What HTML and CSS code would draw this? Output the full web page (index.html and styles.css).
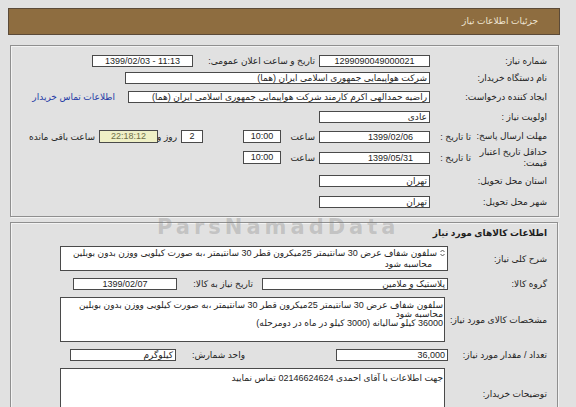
FILE: index.html
```html
<!DOCTYPE html>
<html lang="fa" dir="rtl">
<head>
    <meta charset="UTF-8">
    <meta name="viewport" content="width=device-width, initial-scale=1.0">
    <title>جزئیات اطلاعات نیاز</title>
    <link rel="stylesheet" href="styles.css">
</head>
<body>
    <div class="page">
        <div class="header">جزئیات اطلاعات نیاز</div>

        <div class="panel panel-info">
            <div class="row">
                <div class="label">شماره نیاز:</div>
                <div class="box w111 center">1299090049000021</div>
                <div class="label-mid w126">تاریخ و ساعت اعلان عمومی:</div>
                <div class="box w101 center ltr">1399/02/03 - 11:13</div>
            </div>
            <div class="row">
                <div class="label">نام دستگاه خریدار:</div>
                <div class="box w305">شرکت هواپیمایی جمهوری اسلامی ایران (هما)</div>
            </div>
            <div class="row">
                <div class="label">ایجاد کننده درخواست:</div>
                <div class="box w302">راضیه حمدالهی اکرم کارمند شرکت هواپیمایی جمهوری اسلامی ایران (هما)</div>
                <a href="#" class="contact-link">اطلاعات تماس خریدار</a>
            </div>
            <div class="row">
                <div class="label">اولویت نیاز :</div>
                <div class="box w111">عادی</div>
            </div>
            <div class="row">
                <div class="label split">
                    <span class="main-label">مهلت ارسال پاسخ:</span>
                    <span class="sub-label">تا تاریخ :</span>
                </div>
                <div class="box w111 date">1399/02/06</div>
                <div class="label-mid w38">ساعت</div>
                <div class="box w38 center tall">10:00</div>
                <div class="box w22 center tall days">2</div>
                <div class="label-mid w23">روز و</div>
                <div class="box w59 center tall countdown">22:18:12</div>
                <div class="label-mid remain">ساعت باقی مانده</div>
            </div>
            <div class="row">
                <div class="label split">
                    <span class="main-label">حداقل تاریخ اعتبار قیمت:</span>
                    <span class="sub-label">تا تاریخ :</span>
                </div>
                <div class="box w111 date">1399/05/31</div>
                <div class="label-mid w38">ساعت</div>
                <div class="box w38 center tall">10:00</div>
            </div>
            <div class="row">
                <div class="label">استان محل تحویل:</div>
                <div class="box w111">تهران</div>
            </div>
            <div class="row">
                <div class="label">شهر محل تحویل:</div>
                <div class="box w111">تهران</div>
            </div>
        </div>

        <div class="panel panel-goods">
            <h3 class="section-title">اطلاعات کالاهای مورد نیاز</h3>
            <div class="row">
                <div class="label narrow">شرح کلی نیاز:</div>
                <div class="area area-summary">
                    <svg class="spin" width="5" height="8" viewBox="0 0 5 8">
                        <path d="M0.5 3 L2.5 1 L4.5 3" fill="none" stroke="#444" stroke-width="0.9"/>
                        <path d="M0.5 5 L2.5 7 L4.5 5" fill="none" stroke="#444" stroke-width="0.9"/>
                    </svg>
                    <p>سلفون شفاف عرض 30 سانتیمتر 25میکرون قطر 30 سانتیمتر ،به صورت کیلویی ووزن بدون بوبلین</p>
                    <p class="indent">محاسبه شود</p>
                </div>
            </div>
            <div class="row">
                <div class="label narrow">گروه کالا:</div>
                <div class="box w186">پلاستیک و ملامین</div>
                <div class="label-mid w85">تاریخ نیاز به کالا:</div>
                <div class="box w104 center">1399/02/07</div>
            </div>
            <div class="row">
                <div class="label narrow">مشخصات کالای مورد نیاز:</div>
                <div class="area area-spec">
                    <p>سلفون شفاف عرض 30 سانتیمتر 25میکرون قطر 30 سانتیمتر ،به صورت کیلویی ووزن بدون بوبلین</p>
                    <p>محاسبه شود</p>
                    <p>36000 کیلو سالیانه (3000 کیلو در ماه در دومرحله)</p>
                </div>
            </div>
            <div class="row">
                <div class="label narrow">تعداد / مقدار مورد نیاز:</div>
                <div class="box w112">36,000</div>
                <div class="label-mid w160">واحد شمارش:</div>
                <div class="box w106">کیلوگرم</div>
            </div>
            <div class="row">
                <div class="label narrow">توضیحات خریدار:</div>
                <div class="area area-notes">
                    <p>جهت اطلاعات با آقای احمدی 02146624624 تماس نمایید</p>
                </div>
            </div>
        </div>
    </div>

    <div class="watermark">ParsNamadData</div>
</body>
</html>
```

FILE: styles.css
```css
body {
    margin: 0;
    background-color: #e1e1e1;
    font-family: "Liberation Sans", "DejaVu Sans", sans-serif;
    font-size: 9px;
    color: #1e1e1e;
    direction: rtl;
}
.page {
    width: 552px;
    margin: 8px 16px 0 8px;
}
.header {
    height: 27px;
    box-sizing: border-box;
    background-color: #8e6d40;
    border: 1px solid #5b4a38;
    color: #efe5d3;
    font-size: 9px;
    line-height: 25px;
    padding-right: 21px;
}
.panel {
    border: 1px solid #8f8f8f;
    box-shadow: 1px 1px 0 #f3f3f3, inset 1px 1px 0 #f3f3f3;
    background-color: #e1e1e1;
}
.panel-info {
    margin: 10px 1px 0 2px;
    padding: 7px 11px 5px 0;
    display: grid;
    grid-template-rows: 16px 18px 20px 20px 19px 23px 23px 19px;
}
.panel-goods {
    margin: 5px 2px 0 2px;
    padding: 4px 10px 20px 0;
    display: flex;
    flex-direction: column;
    gap: 7px;
}
.row {
    display: flex;
    align-items: center;
}
.label {
    width: 117px;
    flex-shrink: 0;
    white-space: nowrap;
}
.label.narrow {
    width: 99px;
    white-space: normal;
}
.label.split {
    display: flex;
    align-items: center;
}
.main-label {
    width: 72px;
    flex-shrink: 0;
    line-height: 11px;
    white-space: normal;
}
.sub-label {
    padding-right: 4px;
    white-space: nowrap;
}
.label-mid {
    flex-shrink: 0;
    padding-right: 4px;
    box-sizing: border-box;
    white-space: nowrap;
}
.box {
    height: 12px;
    box-sizing: border-box;
    background-color: #fff;
    border: 1px solid #4a4a4a;
    line-height: 10px;
    padding: 0 2px;
    white-space: nowrap;
    overflow: hidden;
    flex-shrink: 0;
}
.box.tall {
    height: 13px;
    line-height: 11px;
}
.center {
    text-align: center;
}
.ltr {
    direction: ltr;
}
.date {
    padding-right: 16px;
}
.days {
    margin-right: 40px;
}
.countdown {
    background-color: #eff0c6;
    color: #6e6e48;
}
.remain {
    padding-right: 4px;
}
.w22 { width: 22px; }
.w23 { width: 23px; }
.w38 { width: 38px; }
.w59 { width: 59px; }
.w85 { width: 85px; padding-right: 9px; }
.w101 { width: 101px; }
.w104 { width: 104px; }
.w106 { width: 106px; }
.w111 { width: 111px; }
.w112 { width: 112px; }
.w126 { width: 126px; }
.w160 { width: 160px; padding-right: 91px; }
.w186 { width: 186px; }
.w302 { width: 302px; }
.w305 { width: 305px; }
.contact-link {
    color: #1f3aa6;
    text-decoration: none;
    margin-right: 13px;
    white-space: nowrap;
}
.section-title {
    margin: 0;
    font-size: 9px;
    font-weight: bold;
    line-height: 12px;
}
.area {
    background-color: #fff;
    border: 1px solid #4a4a4a;
    box-sizing: border-box;
    position: relative;
}
.area p {
    margin: 0;
    white-space: nowrap;
}
.area-summary {
    width: 388px;
    height: 25px;
    padding: 1px 10px 0 2px;
    line-height: 11px;
}
.area-summary .indent {
    padding-right: 5px;
}
.spin {
    position: absolute;
    right: 2px;
    top: 2px;
}
.area-spec {
    width: 385px;
    height: 45px;
    padding: 3px 1px 0 2px;
    line-height: 9px;
    margin-right: 3px;
    overflow: hidden;
}
.area-notes {
    width: 385px;
    height: 52px;
    padding: 4px 1px 0 2px;
    line-height: 10px;
    margin-right: 3px;
}
.watermark {
    position: absolute;
    left: 157px;
    top: 216px;
    font-family: "DejaVu Sans", sans-serif;
    font-weight: bold;
    font-size: 21px;
    line-height: 22px;
    letter-spacing: 4px;
    color: rgba(120, 120, 120, 0.3);
    direction: ltr;
    pointer-events: none;
}
```
